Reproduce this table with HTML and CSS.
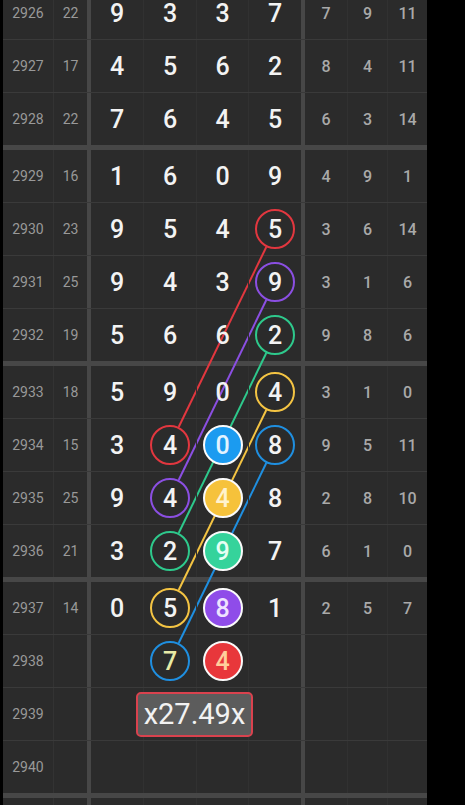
FILE: index.html
```html
<!DOCTYPE html>
<html>
  <head>
    <title>Trend Chart</title>
    <link rel="stylesheet" href="styles.css">
  </head>
  <body>
    <div class="board">
      <div class="row"><div class="c-no">2926</div><div class="c-sum">22</div><div class="c-d">9</div><div class="c-d">3</div><div class="c-d">3</div><div class="c-d last">7</div><div class="c-r">7</div><div class="c-r">9</div><div class="c-r last">11</div></div>
      <div class="row"><div class="c-no">2927</div><div class="c-sum">17</div><div class="c-d">4</div><div class="c-d">5</div><div class="c-d">6</div><div class="c-d last">2</div><div class="c-r">8</div><div class="c-r">4</div><div class="c-r last">11</div></div>
      <div class="row end"><div class="c-no">2928</div><div class="c-sum">22</div><div class="c-d">7</div><div class="c-d">6</div><div class="c-d">4</div><div class="c-d last">5</div><div class="c-r">6</div><div class="c-r">3</div><div class="c-r last">14</div></div>

      <div class="row"><div class="c-no">2929</div><div class="c-sum">16</div><div class="c-d">1</div><div class="c-d">6</div><div class="c-d">0</div><div class="c-d last">9</div><div class="c-r">4</div><div class="c-r">9</div><div class="c-r last">1</div></div>
      <div class="row"><div class="c-no">2930</div><div class="c-sum">23</div><div class="c-d">9</div><div class="c-d">5</div><div class="c-d">4</div><div class="c-d last"><span class="ball red">5</span></div><div class="c-r">3</div><div class="c-r">6</div><div class="c-r last">14</div></div>
      <div class="row"><div class="c-no">2931</div><div class="c-sum">25</div><div class="c-d">9</div><div class="c-d">4</div><div class="c-d">3</div><div class="c-d last"><span class="ball purple">9</span></div><div class="c-r">3</div><div class="c-r">1</div><div class="c-r last">6</div></div>
      <div class="row end"><div class="c-no">2932</div><div class="c-sum">19</div><div class="c-d">5</div><div class="c-d">6</div><div class="c-d">6</div><div class="c-d last"><span class="ball green">2</span></div><div class="c-r">9</div><div class="c-r">8</div><div class="c-r last">6</div></div>

      <div class="row"><div class="c-no">2933</div><div class="c-sum">18</div><div class="c-d">5</div><div class="c-d">9</div><div class="c-d">0</div><div class="c-d last"><span class="ball yellow">4</span></div><div class="c-r">3</div><div class="c-r">1</div><div class="c-r last">0</div></div>
      <div class="row"><div class="c-no">2934</div><div class="c-sum">15</div><div class="c-d">3</div><div class="c-d"><span class="ball red">4</span></div><div class="c-d"><span class="ball fill blue">0</span></div><div class="c-d last"><span class="ball blue">8</span></div><div class="c-r">9</div><div class="c-r">5</div><div class="c-r last">11</div></div>
      <div class="row"><div class="c-no">2935</div><div class="c-sum">25</div><div class="c-d">9</div><div class="c-d"><span class="ball purple">4</span></div><div class="c-d"><span class="ball fill yellow">4</span></div><div class="c-d last">8</div><div class="c-r">2</div><div class="c-r">8</div><div class="c-r last">10</div></div>
      <div class="row end"><div class="c-no">2936</div><div class="c-sum">21</div><div class="c-d">3</div><div class="c-d"><span class="ball green">2</span></div><div class="c-d"><span class="ball fill green">9</span></div><div class="c-d last">7</div><div class="c-r">6</div><div class="c-r">1</div><div class="c-r last">0</div></div>

      <div class="row"><div class="c-no">2937</div><div class="c-sum">14</div><div class="c-d">0</div><div class="c-d"><span class="ball yellow">5</span></div><div class="c-d"><span class="ball fill purple">8</span></div><div class="c-d last">1</div><div class="c-r">2</div><div class="c-r">5</div><div class="c-r last">7</div></div>
      <div class="row"><div class="c-no">2938</div><div class="c-sum"></div><div class="c-d"></div><div class="c-d"><span class="ball blue tint">7</span></div><div class="c-d"><span class="ball fill red">4</span></div><div class="c-d last"></div><div class="c-r"></div><div class="c-r"></div><div class="c-r last"></div></div>
      <div class="row"><div class="c-no">2939</div><div class="c-sum"></div><div class="c-d"></div><div class="c-d"></div><div class="c-d"></div><div class="c-d last"></div><div class="c-r"></div><div class="c-r"></div><div class="c-r last"></div></div>
      <div class="row end"><div class="c-no">2940</div><div class="c-sum"></div><div class="c-d"></div><div class="c-d"></div><div class="c-d"></div><div class="c-d last"></div><div class="c-r"></div><div class="c-r"></div><div class="c-r last"></div></div>

      <div class="row"><div class="c-no"></div><div class="c-sum"></div><div class="c-d"></div><div class="c-d"></div><div class="c-d"></div><div class="c-d last"></div><div class="c-r"></div><div class="c-r"></div><div class="c-r last"></div></div>

      <!-- trend lines, drawn edge to edge between the circles -->
      <svg class="lines" width="424" height="830" viewBox="0 0 424 830">
        <line x1="263.3" y1="260" x2="175.7" y2="440" stroke="#e2373f" />
        <line x1="263.3" y1="313" x2="175.7" y2="493" stroke="#8b4fe2" />
        <line x1="263.3" y1="366" x2="175.7" y2="546" stroke="#2ec98c" />
        <line x1="263.3" y1="423" x2="175.7" y2="603" stroke="#f4c443" />
        <line x1="263.3" y1="476" x2="175.7" y2="656" stroke="#1f8fe0" />
      </svg>

      <div class="badge">x27.49x</div>
    </div>
  </body>
</html>
```

FILE: styles.css
```css
html, body {
  margin: 0;
  background-color: #000;
  overflow: hidden;
}
body {
  font-family: Roboto, "Liberation Sans", sans-serif;
}
.board {
  position: relative;
  width: 424px;
  margin: -13px 0 0 3px;
  background-color: #2b2b2b;
}
.row {
  display: grid;
  grid-template-columns: 51px 37px 53px 53px 52px 56px 43px 40px 39px;
  border-bottom: 1px solid #3a3a3a;
}
.row.end {
  border-bottom: 5px solid #474747;
}
.row > div {
  box-sizing: border-box;
  height: 52px;
  display: flex;
  align-items: center;
  justify-content: center;
}
.c-no {
  border-right: 1px solid #333;
  color: #999;
  font-size: 14px;
}
.c-sum {
  border-right: 4px solid #474747;
  color: #999;
  font-size: 14px;
}
.c-d {
  position: relative;
  z-index: 2;
  border-right: 1px solid #313131;
  color: #f3f3f3;
  font-size: 25px;
  font-weight: 500;
}
.c-d.last {
  border-right: 4px solid #474747;
}
.c-r {
  border-right: 1px solid #313131;
  color: #a9a9a9;
  font-size: 16px;
  font-weight: 500;
}
.c-r.last {
  border-right: none;
}
.ball {
  display: flex;
  align-items: center;
  justify-content: center;
  box-sizing: border-box;
  width: 40px;
  height: 40px;
  border-radius: 50%;
  border: 2px solid;
}
.ball.red { border-color: #e2373f; }
.ball.purple { border-color: #8b4fe2; }
.ball.green { border-color: #2ec98c; }
.ball.yellow { border-color: #f4c443; }
.ball.blue { border-color: #1f8fe0; }
.ball.tint { color: #e8eaa6; }
.ball.fill {
  border-color: #fafafa;
}
.fill.blue { background-color: #1b9bf0; color: #e2f3ff; }
.fill.yellow { background-color: #f6c23b; color: #fff3cf; }
.fill.green { background-color: #35d39b; color: #e6fff4; }
.fill.purple { background-color: #8f4ce9; color: #eee3ff; }
.fill.red { background-color: #e8373b; color: #ffcf9c; }
.lines {
  position: absolute;
  left: 0;
  top: 0;
  z-index: 1;
  stroke-width: 2;
}
.badge {
  position: absolute;
  left: 133px;
  top: 705px;
  z-index: 3;
  box-sizing: border-box;
  width: 117px;
  height: 45px;
  border: 2px solid #d9424e;
  border-radius: 5px;
  background-color: #5c5c5c;
  color: #f2f2f2;
  font-size: 29px;
  line-height: 41px;
  text-align: center;
}
```
